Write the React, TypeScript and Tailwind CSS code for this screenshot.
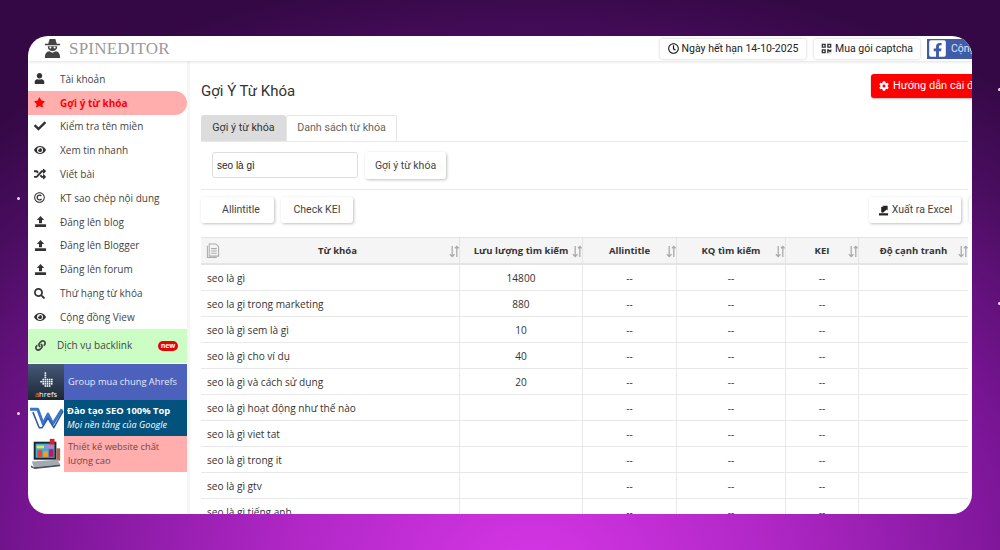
import {
  FaCheck, FaCog, FaEye, FaFacebookSquare, FaLink, FaQrcode, FaRandom, FaRegClock,
  FaRegCopyright, FaSearch, FaStar, FaUser,
} from 'react-icons/fa';

const OPEN = "font-['Open_Sans',sans-serif]";
const ROBOTO = "font-['Roboto',sans-serif]";

function UploadIcon() {
  return (
    <svg viewBox="0 0 14 14" className="w-[13px] h-[13px]" fill="#333">
      <path d="M7 1 L11 5.4 H8.6 V9 H5.4 V5.4 H3 Z" />
      <rect x="1" y="10" width="12" height="3" rx="0.4" />
    </svg>
  );
}

function SortIcon() {
  return (
    <svg viewBox="0 0 12 14" className="absolute -right-[1px] top-[7px] w-[11px] h-[13px]" fill="none" stroke="#aaa" strokeWidth="1.4">
      <path d="M3.5 1 V12.5 M1 10 L3.5 12.5 L6 10" />
      <path d="M8.5 13 V1.5 M6.5 3.5 L8.5 1.5 L10.5 3.5" />
    </svg>
  );
}

function Spy() {
  return (
    <svg viewBox="0 0 20 22" className="w-[19px] h-[21px]" fill="#444">
      <path d="M7 1 L13 1 L14.5 6 H18 V7.5 H2 V6 H5.5 Z" />
      <path d="M5 8.5 H15 C15 12 13 13.5 10 13.5 C7 13.5 5 12 5 8.5 Z" />
      <circle cx="7.8" cy="10" r="1.1" fill="#fff" />
      <circle cx="12.2" cy="10" r="1.1" fill="#fff" />
      <path d="M2 21 C2 16 4 14.5 6.5 14 L10 15.5 L13.5 14 C16 14.5 18 16 18 21 Z" />
    </svg>
  );
}

function AhrefsThumb() {
  const dots = [
    [12, 3], [12, 6], [12, 9], [9, 12], [12, 12], [15, 12], [18, 12], [21, 12],
    [6, 15], [9, 15], [12, 15], [15, 15], [18, 15], [21, 15], [9, 18], [12, 18], [15, 18], [18, 18], [21, 18],
    [12, 21], [15, 21], [18, 21],
  ];
  return (
    <div className="w-[36px] h-[36px] shrink-0 bg-gradient-to-b from-[#46587a] to-[#1d2733] flex flex-col items-center pt-[6px]">
      <svg viewBox="0 0 28 26" className="w-[20px] h-[19px]" fill="#fff">
        {dots.map(([x, y], i) => (
          <rect key={i} x={x} y={y} width="2.2" height="2.2" />
        ))}
      </svg>
      <span className={`${OPEN} text-[7.5px] leading-[9px] text-white mt-[1px]`}>
        <span className="text-[#f58220]">a</span>hrefs
      </span>
    </div>
  );
}

function WThumb() {
  return (
    <div className="w-[36px] h-[36px] shrink-0 bg-white flex items-center justify-center">
      <svg viewBox="0 0 36 24" className="w-[35px] h-[24px]" fill="none" stroke="#3b74c9" strokeWidth="3" strokeLinejoin="round">
        <path d="M1 3 H9 L14.5 18 L19.5 8 L24.5 18 L34 3" />
        <path d="M4 6 L10.5 22 H13.5 L19.5 12 L25.5 22 L35 5" stroke="#2a5aa8" strokeWidth="1.6" />
      </svg>
    </div>
  );
}

function SiteThumb() {
  return (
    <div className="w-[36px] h-[36px] shrink-0 bg-white flex items-center justify-center">
      <svg viewBox="0 0 36 36" className="w-[34px] h-[34px]">
        <rect x="5" y="5" width="24" height="19" fill="#1c2430" />
        <rect x="7" y="7" width="20" height="15" fill="#38b0e0" />
        <rect x="8" y="9" width="8" height="3" fill="#f4e04d" />
        <rect x="17" y="9" width="9" height="3" fill="#f06ab0" />
        <rect x="9" y="14" width="5" height="7" fill="#e8452c" />
        <rect x="15" y="15" width="5" height="6" fill="#f59c1a" />
        <rect x="21" y="13" width="5" height="8" fill="#c2185b" />
        <rect x="22" y="2" width="5" height="6" fill="#d6212a" />
        <rect x="29" y="12" width="4" height="13" fill="#b0654a" />
        <path d="M3 26 L30 24 L33 29 L5 32 Z" fill="#a3aab2" />
        <path d="M2 30 L5 32 L33 29 L33 31 L6 34 L2 32 Z" fill="#4c535b" />
      </svg>
    </div>
  );
}

const menu = [
  { label: 'Tài khoản', icon: <FaUser size={11} color="#333" /> },
  { label: 'Gợi ý từ khóa', icon: <FaStar size={11} color="#f00" />, active: true },
  { label: 'Kiểm tra tên miền', icon: <FaCheck size={12} color="#333" /> },
  { label: 'Xem tin nhanh', icon: <FaEye size={12} color="#333" /> },
  { label: 'Viết bài', icon: <FaRandom size={12} color="#333" /> },
  { label: 'KT sao chép nội dung', icon: <FaRegCopyright size={11} color="#333" /> },
  { label: 'Đăng lên blog', icon: <UploadIcon /> },
  { label: 'Đăng lên Blogger', icon: <UploadIcon /> },
  { label: 'Đăng lên forum', icon: <UploadIcon /> },
  { label: 'Thứ hạng từ khóa', icon: <FaSearch size={11} color="#333" /> },
  { label: 'Cộng đồng View', icon: <FaEye size={12} color="#333" /> },
];

const rows = [
  ['seo là gì', '14800'],
  ['seo la gi trong marketing', '880'],
  ['seo là gì sem là gì', '10'],
  ['seo là gì cho ví dụ', '40'],
  ['seo là gì và cách sử dụng', '20'],
  ['seo là gì hoạt động như thế nào', ''],
  ['seo là gì viet tat', ''],
  ['seo là gì trong it', ''],
  ['seo là gì gtv', ''],
  ['seo là gì tiếng anh', ''],
];

const columns = [
  { label: 'Lưu lượng tìm kiếm', w: 'w-[123px]' },
  { label: 'Allintitle', w: 'w-[94px]' },
  { label: 'KQ tìm kiếm', w: 'w-[109px]' },
  { label: 'KEI', w: 'w-[73px]' },
  { label: 'Độ cạnh tranh', w: 'w-[109px]' },
];

function Sparkle({ className }: { className: string }) {
  return <span className={`absolute w-[3px] h-[3px] rounded-full bg-[#f3d6ff] ${className}`} />;
}

export default function App() {
  return (
    <div className="relative w-[1000px] h-[550px] overflow-hidden pt-[36px] px-[28px] bg-[radial-gradient(ellipse_800px_600px_at_530px_570px,#d636e6_0%,#b027c6_30%,#7a1596_62%,#4a0d60_85%,#340845_100%)]">
      <Sparkle className="left-[17px] top-[197px]" />
      <Sparkle className="left-[17px] top-[412px]" />
      <Sparkle className="left-[998px] top-[302px]" />
      <Sparkle className="left-[998px] top-[88px]" />

      <div className="w-[944px] h-[478px] bg-white rounded-[20px] overflow-hidden flex flex-col">
        <header className="h-[25px] shrink-0 flex items-center justify-between pl-[15px] shadow-[0_1px_3px_rgba(0,0,0,0.12)] relative">
          <div className="flex items-center gap-[7px]">
            <Spy />
            <span className="font-['Liberation_Serif',serif] text-[17px] tracking-[0.2px] text-[#9a9a9a]">SPINEDITOR</span>
          </div>
          <div className={`${ROBOTO} flex items-center text-[10.5px] text-[#222]`}>
            <div className="w-[146px] h-[20px] flex items-center justify-center gap-[3px] rounded-[2px] shadow-[0_0_3px_rgba(0,0,0,0.22)] mr-[8px]">
              <FaRegClock size={11} color="#111" />
              <span>Ngày hết hạn 14-10-2025</span>
            </div>
            <div className="w-[106px] h-[20px] flex items-center justify-center gap-[3px] rounded-[2px] shadow-[0_0_3px_rgba(0,0,0,0.22)] mr-[7px]">
              <FaQrcode size={11} color="#333" />
              <span>Mua gói captcha</span>
            </div>
            <div className="w-[45px] h-[20px] bg-[#3f5ba9] flex items-center overflow-hidden text-white pl-[1px]">
              <FaFacebookSquare size={19} color="#fff" className="shrink-0" />
              <span className="ml-[4px] whitespace-nowrap text-[#dfe6f7]">Cộng đồng</span>
            </div>
          </div>
        </header>

        <div className="flex-1 flex min-h-0">
          <aside className={`${OPEN} w-[159px] shrink-0 pt-[6px] text-[10px] text-[#444]`}>
            <nav className="flex flex-col">
              {menu.map((item) => (
                <div
                  key={item.label}
                  className={`h-[23.8px] flex items-center rounded-r-full ${
                    item.active ? 'bg-[#ffadad] text-[#f00] font-bold' : ''
                  }`}
                >
                  <span className="w-[32px] pl-[6px] flex items-center">{item.icon}</span>
                  <span className="pt-[1px]">{item.label}</span>
                </div>
              ))}
            </nav>
            <div className="h-[34px] bg-[#ccfdc4] flex items-center pl-[7px] pr-[9px]">
              <FaLink size={11} color="#444" />
              <span className="ml-[11px] flex-1">Dịch vụ backlink</span>
              <span className="w-[20px] h-[10px] rounded-full bg-[#e8000d] border border-dotted border-[#e8000d] text-white text-[7px] leading-[8px] font-bold text-center">new</span>
            </div>
            <div className="mt-[1px] flex flex-col">
              <div className="h-[36px] flex bg-[#4b61bb]">
                <AhrefsThumb />
                <span className="self-center pl-[4px] text-[#e6e9f7] text-[9.3px] whitespace-nowrap">Group mua chung Ahrefs</span>
              </div>
              <div className="h-[36px] flex bg-[#02527d]">
                <WThumb />
                <div className="pl-[3px] self-center text-white leading-[14px]">
                  <div className="font-bold whitespace-nowrap text-[9.4px]">Đào tạo SEO 100% Top</div>
                  <div className="italic text-[9.1px] whitespace-nowrap">Mọi nền tảng của Google</div>
                </div>
              </div>
              <div className="h-[36px] flex bg-[#ffadad]">
                <SiteThumb />
                <div className="pl-[4px] pr-[20px] self-center text-[#6a4a4a] text-[9.3px] leading-[14px]">Thiết kế website chất lượng cao</div>
              </div>
            </div>
          </aside>

          <div className="w-[3px] shrink-0 bg-[#f6f6f6]" />

          <main className="flex-1 min-w-0 overflow-hidden pl-[11px]">
            <div className="w-[767px]">
              <div className="h-[54px] flex items-start justify-between">
                <h1 className={`${ROBOTO} text-[15px] text-[#333] mt-[20px] leading-[20px]`}>Gợi Ý Từ Khóa</h1>
                <div className={`${ROBOTO} w-[127px] h-[24px] shrink-0 -mr-[30px] mt-[13px] bg-[#f00] text-white text-[11px] rounded-[3px] shadow-[0_1px_2px_rgba(0,0,0,0.3)] flex items-center pl-[8px] gap-[4px] whitespace-nowrap overflow-hidden`}>
                  <FaCog size={10} color="#fff" className="shrink-0" />
                  <span>Hướng dẫn cài đặt</span>
                </div>
              </div>

              <div className={`${ROBOTO} flex text-[10.7px] h-[26px]`}>
                <div className="w-[85px] flex items-center justify-center bg-[#dcdcdc] text-[#333] rounded-t-[3px]">Gợi ý từ khóa</div>
                <div className="w-[111px] flex items-center justify-center text-[#666] border border-b-0 border-[#e6e6e6] rounded-t-[3px]">Danh sách từ khóa</div>
              </div>

              <div className="h-[49px] border-t border-b border-[#e8e8e8] flex items-start pt-[10px] pl-[11px]">
                <input
                  readOnly
                  value="seo là gì"
                  className="font-['Liberation_Sans',sans-serif] w-[146px] h-[26px] border border-[#ddd] rounded-[3px] px-[4px] text-[10px] text-[#222] outline-none"
                />
                <button className={`${ROBOTO} ml-[7px] w-[81px] h-[27px] rounded-[3px] text-[10.5px] text-[#444] shadow-[1px_1px_3px_rgba(0,0,0,0.25)]`}>Gợi ý từ khóa</button>
              </div>

              <div className={`${ROBOTO} flex items-start w-[821px] mt-[7px] h-[27px] text-[10.5px] text-[#444]`}>
                <button className="w-[73px] h-[26px] pl-[7px] rounded-[3px] shadow-[1px_1px_3px_rgba(0,0,0,0.25)]">Allintitle</button>
                <button className="ml-[7px] w-[72px] h-[26px] rounded-[3px] shadow-[1px_1px_3px_rgba(0,0,0,0.25)]">Check KEI</button>
                <div className="flex-1" />
                <button className="w-[92px] h-[26px] rounded-[3px] shadow-[1px_1px_3px_rgba(0,0,0,0.25)] flex items-center justify-center gap-[3px]">
                  <svg viewBox="0 0 12 12" className="w-[11px] h-[11px]" fill="#222">
                    <rect x="1" y="9" width="10" height="2.4" />
                    <path d="M3.5 7.8 V2 H6 L5 0.8 H10.5 V6 L9.4 5 L5.5 8.5 Z" />
                  </svg>
                  <span>Xuất ra Excel</span>
                </button>
                <div className="w-[53px] h-[26px] ml-[8px] rounded-[3px] shadow-[0_0_3px_rgba(0,0,0,0.2)]" />
              </div>

              <div className={`${OPEN} mt-[13px] text-[10.1px] text-[#333]`}>
                <div className="flex h-[28px] bg-[#f5f5f5] border-t border-b-2 border-[#e4e4e4] font-bold text-[9.5px] leading-[14px]">
                  <div className="relative w-[259px] flex items-center border-r border-[#e4e4e4] pl-[5px] pr-[4px]">
                    <svg viewBox="0 0 14 16" className="w-[14px] h-[15px] shrink-0" fill="none" stroke="#aaa" strokeWidth="1.1">
                      <path d="M3 1 H10 L13 4 V14 H3 Z" />
                      <path d="M1 3 V15.5 H11" />
                      <path d="M5 6 H11 M5 8.5 H11 M5 11 H11" />
                    </svg>
                    <span className="flex-1 text-center pt-[1px]">Từ khóa</span>
                    <SortIcon />
                  </div>
                  {columns.map((c) => (
                    <div key={c.label} className={`${c.w} relative flex items-center justify-center border-r border-[#e4e4e4] last:border-r-0`}>
                      <span className="whitespace-nowrap pt-[1px]">{c.label}</span>
                      <SortIcon />
                    </div>
                  ))}
                </div>
                {rows.map(([kw, vol]) => (
                  <div key={kw} className="flex h-[26px] border-b border-[#e8e8e8] leading-[27px]">
                    <div className="w-[259px] pl-[6px] border-r border-[#e8e8e8]">{kw}</div>
                    <div className="w-[123px] text-center border-r border-[#e8e8e8]">{vol}</div>
                    <div className="w-[94px] text-center border-r border-[#e8e8e8]">--</div>
                    <div className="w-[109px] text-center border-r border-[#e8e8e8]">--</div>
                    <div className="w-[73px] text-center border-r border-[#e8e8e8]">--</div>
                    <div className="w-[109px]" />
                  </div>
                ))}
              </div>
            </div>
          </main>
        </div>
      </div>
    </div>
  );
}
